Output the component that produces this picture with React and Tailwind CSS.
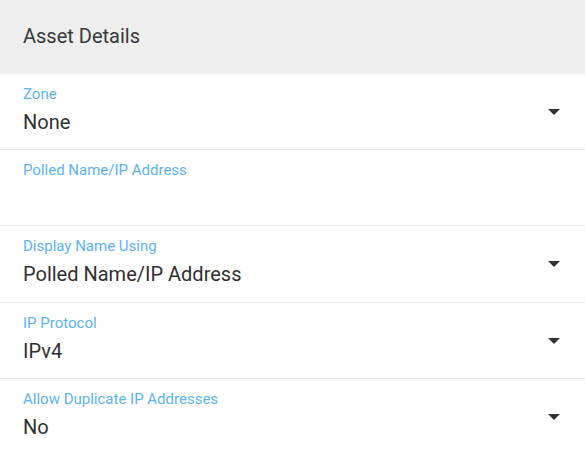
import React from 'react'

const rows = [
    { label: 'Zone', value: 'None', select: true, h: 'h-[76px]' },
    { label: 'Polled Name/IP Address', value: '', select: false, h: 'h-[76px]' },
    { label: 'Display Name Using', value: 'Polled Name/IP Address', select: true, h: 'h-[77px]' },
    { label: 'IP Protocol', value: 'IPv4', select: true, h: 'h-[76px]' },
    { label: 'Allow Duplicate IP Addresses', value: 'No', select: true, h: 'h-[76px]' },
]

function Caret() {
    return (
        <svg width="12" height="6" viewBox="0 0 12 6" className="shrink-0">
            <path d="M0 0 L12 0 L6 6 Z" fill="#333333" />
        </svg>
    )
}

export default function App() {
    return (
        <div className="w-[585px] h-[452px] bg-white overflow-hidden" style={{ fontFamily: 'Roboto, "Liberation Sans", sans-serif' }}>
            <div className="h-[74px] bg-[#eeeeee] px-[23px] pt-[22px]">
                <h2 className="text-[20px] leading-[28px] text-[#383838]">Asset Details</h2>
            </div>
            {rows.map((r) => (
                <div key={r.label} className={`${r.h} border-b border-[#e8e8e8] flex items-center pl-[23px] pr-[25px]`}>
                    <div className="flex-1 self-start pt-[12px]">
                        <div className="text-[15px] leading-[16px] text-[#5cb3f6]">{r.label}</div>
                        <div className="text-[20px] leading-[24px] text-[#303030] mt-[8px] h-[24px]">{r.value}</div>
                    </div>
                    {r.select && <Caret />}
                </div>
            ))}
        </div>
    )
}
